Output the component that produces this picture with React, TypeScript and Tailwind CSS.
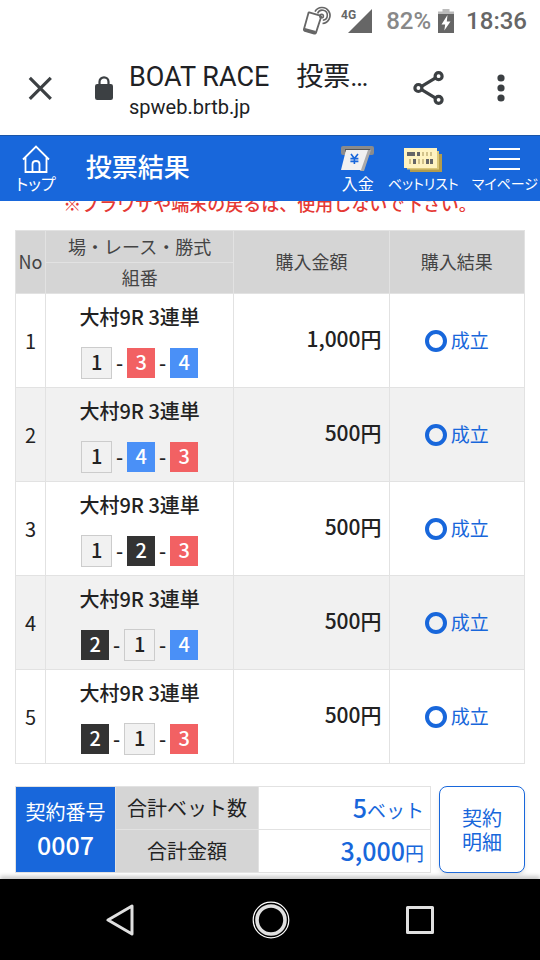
import clsx from "clsx";

type Bet = { no: number; boats: number[]; amount: string };

const bets: Bet[] = [
  { no: 1, boats: [1, 3, 4], amount: "1,000" },
  { no: 2, boats: [1, 4, 3], amount: "500" },
  { no: 3, boats: [1, 2, 3], amount: "500" },
  { no: 4, boats: [2, 1, 4], amount: "500" },
  { no: 5, boats: [2, 1, 3], amount: "500" },
];

// official boat colours
const boatStyle: Record<number, string> = {
  1: "h-8 w-[31px] border border-[#ccc] bg-[#f1f1f1] text-[#222]",
  2: "h-[30px] w-7 bg-[#333] text-white",
  3: "h-[30px] w-7 bg-[#f26163] text-white",
  4: "h-[30px] w-7 bg-[#4a90f7] text-white",
};

function StatusBar() {
  return (
    <div className="flex h-10 items-center justify-end pr-[13px] pt-[2px] font-['Roboto',sans-serif] text-2xl font-medium text-[#666]">
      <svg className="mr-2 h-[30px] w-[30px]" viewBox="0 0 30 30" fill="none" stroke="currentColor">
        <path d="M6.2 6.3 17.2 9.6Q18.4 10 18 11.2L13 26.6Q12.6 28 11.2 27.6L1.8 24.8Q.6 24.4 1 23L5.6 6.6Z" strokeWidth="1.8" strokeLinejoin="round" />
        <path d="m1.5 23.5 11 3" strokeWidth="3" />
        <path d="M12 5.6A8 8 0 1 1 19.5 17.5" strokeWidth="1.7" />
        <path d="M14.6 7.6A5 5 0 1 1 19.8 14.2" strokeWidth="1.6" />
        <circle cx="18.6" cy="10" r="1.8" strokeWidth="1.6" />
      </svg>
      <span className="mb-3 self-center text-xs font-bold leading-4">4G</span>
      <svg className="-ml-2 mr-[14px] h-6 w-6" viewBox="0 0 24 24" fill="currentColor">
        <path d="M24 0v24H0z" />
      </svg>
      <span className="mr-[7px] text-[#888]">82%</span>
      <svg className="mr-3 h-6 w-4" viewBox="0 0 16 24">
        <path d="M4.5 0h7v2.5H16V6H0V2.5h4.5z" fill="#bbb" />
        <path d="M0 5h16v19H0z" fill="#666" />
        <path d="M9.5 6 3.5 15.5h3.7L6.3 21.5l6.2-9H8.8z" fill="#fff" />
      </svg>
      <span>18:36</span>
    </div>
  );
}

function BrowserBar() {
  return (
    <div className="flex h-[95px] items-center pl-7 pr-[35px] text-[#3c4043]">
      <button type="button" aria-label="閉じる" className="mr-[43px] shrink-0">
        <svg className="h-6 w-6" viewBox="0 0 24 24" fill="none" stroke="currentColor" strokeWidth="3.2">
          <path d="m1.8 1.8 21 21m0-21-21 21" />
        </svg>
      </button>
      <svg className="mr-4 h-6 w-[18px] shrink-0" viewBox="0 0 18 24">
        <path d="M4.5 10V5.8a4.5 4.5 0 0 1 9 0V10" fill="none" stroke="currentColor" strokeWidth="2.2" />
        <rect y="8" width="18" height="16" rx="2.2" fill="currentColor" />
      </svg>
      <div className="min-w-0 flex-1 pt-[6px] font-['Roboto','Noto_Sans_CJK_JP',sans-serif] text-[#202124]">
        <div className="whitespace-pre text-[27px] leading-8">BOAT RACE　投票…</div>
        <div className="text-xl leading-7">spweb.brtb.jp</div>
      </div>
      <button type="button" aria-label="共有" className="mr-[52px] shrink-0">
        <svg className="h-[34px] w-8" viewBox="0 0 32 34" fill="none" stroke="currentColor" strokeWidth="3.2">
          <path d="m8.6 15.3 13.6-8.2M8.6 18.7l13.6 8.2" />
          <circle cx="5.4" cy="17" r="3.5" />
          <circle cx="25.6" cy="5.2" r="3.5" />
          <circle cx="25.6" cy="28.8" r="3.5" />
        </svg>
      </button>
      <button type="button" aria-label="メニュー" className="shrink-0">
        <svg className="h-7 w-2" viewBox="0 0 8 28" fill="currentColor">
          <circle cx="4" cy="4" r="3.6" />
          <circle cx="4" cy="14" r="3.6" />
          <circle cx="4" cy="24" r="3.6" />
        </svg>
      </button>
    </div>
  );
}

function NavItem({ label, small, children }: { label: string; small?: boolean; children: React.ReactNode }) {
  return (
    <a href="#" className="flex flex-col items-center whitespace-nowrap">
      <span className="flex h-7 items-center">{children}</span>
      <span className={clsx("leading-5 [font-feature-settings:'palt']", small ? "text-sm" : "text-base")}>{label}</span>
    </a>
  );
}

function AppHeader() {
  return (
    <header className="relative z-10 flex h-[66px] items-center border-t border-[#1a55a8] bg-[#1867db] pl-4 pr-[2px] text-white">
      <NavItem label="トップ">
        <svg className="h-7 w-7" viewBox="0 0 28 28" fill="none" stroke="currentColor" strokeWidth="1.8">
          <path d="M1 14.5 14 1.5l13 13M3.5 12.5V27h21V12.5" />
          <path d="M10.5 27v-8q0-3 3.5-3t3.5 3v8" />
        </svg>
      </NavItem>
      <h1 className="ml-[30px] pb-[6px] text-[26px] font-medium leading-8">投票結果</h1>
      <nav className="ml-auto flex gap-[13px]">
        <NavItem label="入金">
          <svg className="h-7 w-[34px]" viewBox="0 0 34 28">
            <rect y="1" width="33" height="9" rx="2" fill="#8b8b8b" />
            <path d="M4 4h25v3H4z" fill="#555" />
            <path d="M26 5h4l-7 21h-4z" fill="#aaa" />
            <path d="M5 5h22l-7 20H0z" fill="#f1f1f1" />
            <path d="m10 9 3.4 4.6L17 9m-3.6 4.6V19M9.4 13.6h8M9.4 16.4h8" fill="none" stroke="#1867db" strokeWidth="1.6" />
          </svg>
        </NavItem>
        <NavItem label="ベットリスト" small>
          <svg className="h-7 w-[38px]" viewBox="0 0 38 28">
            <path d="M6 9h32v18H6z" fill="#b39c4c" />
            <path d="M3 6h32v18.5H3z" fill="#dcc878" />
            <path d="M0 3h33v20H0z" fill="#fff3c0" />
            <path d="M3 7h8v4H3zm10 0h3v4h-3zM9 14h3v5H9zm13 0h3v5h-3zm4 0h3v5h-3z" fill="#666" />
            <path d="M18 7h2v4h-2zm4 0h2v4h-2zm4 0h2v4h-2zM5 14h2v5H5zm9 0h2v5h-2zm4 0h2v5h-2z" fill="#d2c28a" />
          </svg>
        </NavItem>
        <NavItem label="マイページ" small>
          <svg className="h-7 w-[31px]" viewBox="0 0 31 28" stroke="currentColor" strokeWidth="2">
            <path d="M0 4h31M0 14h31M0 24h31" />
          </svg>
        </NavItem>
      </nav>
    </header>
  );
}

function BetRow({ bet }: { bet: Bet }) {
  return (
    <tr className="h-[94px] even:bg-[#f1f1f1]">
      <td className="border border-[#e2e2e2] text-center text-xl">{bet.no}</td>
      <td className="border border-[#e2e2e2]">
        <div className="text-center text-xl font-medium leading-7">大村9R 3連単</div>
        <div className="mt-4 flex items-center justify-center text-xl font-medium leading-6">
          {bet.boats.map((boat, i) => (
            <div key={boat} className="flex items-center">
              {i > 0 && <span className="w-[15px] text-center">-</span>}
              <span className={clsx("flex items-center justify-center pb-[2px]", boatStyle[boat])}>{boat}</span>
            </div>
          ))}
        </div>
      </td>
      <td className="border border-[#e2e2e2] pb-1 pr-[7px] text-right text-[21px] font-medium">{bet.amount}円</td>
      <td className="border border-[#e2e2e2] text-[19px] text-[#1867db]">
        <div className="flex items-center justify-center gap-1">
          <span className="size-[22px] rounded-full border-4 border-[#1867db]" />
          成立
        </div>
      </td>
    </tr>
  );
}

function BetTable() {
  const th = "border border-[#e2e2e2] p-0 pb-[2px] font-normal";
  return (
    <table className="w-full table-fixed border-collapse">
      <colgroup>
        <col className="w-[30px]" />
        <col className="w-[37%]" />
        <col className="w-[30.5%]" />
        <col />
      </colgroup>
      <thead className="bg-[#d5d5d5] text-lg leading-6 text-[#444]">
        <tr className="h-8">
          <th rowSpan={2} className={th}>No</th>
          <th className={th}>場・レース・勝式</th>
          <th rowSpan={2} className={th}>購入金額</th>
          <th rowSpan={2} className={th}>購入結果</th>
        </tr>
        <tr className="h-[31px]">
          <th className={th}>組番</th>
        </tr>
      </thead>
      <tbody>
        {bets.map((bet) => (
          <BetRow key={bet.no} bet={bet} />
        ))}
      </tbody>
    </table>
  );
}

function Summary() {
  const th = "border border-[#e2e2e2] bg-[#d5d5d5] font-normal";
  const td = "border border-[#e2e2e2] p-0 pr-[6px] text-right text-[19px] text-[#1867db]";
  return (
    <div className="mt-[22px] flex gap-2">
      <table className="flex-1 table-fixed border-collapse text-xl leading-7">
        <colgroup>
          <col className="w-[100px]" />
          <col className="w-[143px]" />
          <col />
        </colgroup>
        <tbody>
          <tr className="h-[43px]">
            <th rowSpan={2} className="border border-[#e2e2e2] bg-[#1867db] font-normal text-white">
              契約番号
              <div className="text-[25px] font-medium leading-9">0007</div>
            </th>
            <th className={th}>合計ベット数</th>
            <td className={td}>
              <span className="text-[25px] font-medium">5</span>ベット
            </td>
          </tr>
          <tr className="h-[43px]">
            <th className={th}>合計金額</th>
            <td className={td}>
              <span className="text-[25px] font-medium">3,000</span>円
            </td>
          </tr>
        </tbody>
      </table>
      <button
        type="button"
        className="w-[86px] rounded-lg border border-[#1867db] bg-white text-xl leading-6 text-[#1867db] shadow-md"
      >
        契約
        <br />
        明細
      </button>
    </div>
  );
}

function SystemNav() {
  return (
    <div className="relative z-10 mt-auto flex h-[81px] items-center justify-center gap-[116px] bg-black text-[#e0e0e0] shadow-[0_-3px_4px_#ccc]">
      <button type="button" aria-label="戻る">
        <svg className="h-8 w-[30px]" viewBox="0 0 30 32" fill="none" stroke="currentColor" strokeWidth="3" strokeLinejoin="round">
          <path d="M26 2v28L2 16z" />
        </svg>
      </button>
      <button type="button" aria-label="ホーム">
        <svg className="size-[38px]" viewBox="0 0 38 38" fill="none" stroke="currentColor">
          <circle cx="19" cy="19" r="17.8" stroke="#fff" strokeWidth="1.2" />
          <circle cx="19" cy="19" r="14" strokeWidth="3.6" />
        </svg>
      </button>
      <button type="button" aria-label="履歴">
        <svg className="size-7" viewBox="0 0 28 28" fill="none" stroke="currentColor" strokeWidth="3" strokeLinejoin="round">
          <path d="M1.5 1.5h25v25h-25z" />
        </svg>
      </button>
    </div>
  );
}

export default function App() {
  return (
    <div className="flex min-h-screen flex-col bg-white font-['Noto_Sans_CJK_JP',sans-serif] text-[#222]">
      <StatusBar />
      <BrowserBar />
      <AppHeader />
      <main className="px-[15px] pb-[6px]">
        {/* the notice is scrolled halfway under the header */}
        <p className="-mt-[10px] mb-[15px] whitespace-nowrap text-center text-lg font-medium leading-6 text-[#e53935]">
          ※ブラウザや端末の戻るは、使用しないで下さい。
        </p>
        <BetTable />
        <Summary />
      </main>
      <SystemNav />
    </div>
  );
}
